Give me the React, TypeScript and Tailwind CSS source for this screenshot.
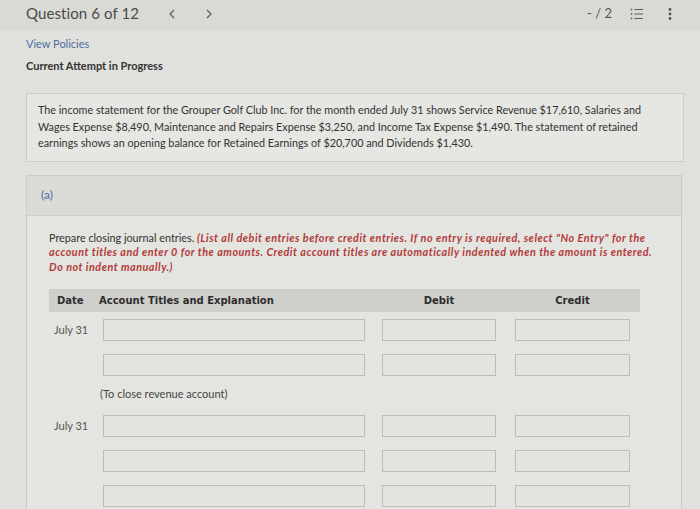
import React from "react";

const ListIcon: React.FC = () => (
    <svg width="14" height="14" viewBox="0 0 14 14" fill="none">
        <circle cx="1.5" cy="2.5" r="0.9" fill="#6b6b6b"/>
        <circle cx="1.5" cy="7" r="0.9" fill="#6b6b6b"/>
        <circle cx="1.5" cy="11.5" r="0.9" fill="#6b6b6b"/>
        <path d="M4.5 2.5H13M4.5 7H13M4.5 11.5H13" stroke="#5b5b5b" strokeWidth="1.2"/>
    </svg>
);

const Kebab: React.FC = () => (
    <svg width="4" height="14" viewBox="0 0 4 14">
        <circle cx="2" cy="2.5" r="1.4" fill="#555"/>
        <circle cx="2" cy="7" r="1.4" fill="#555"/>
        <circle cx="2" cy="11.5" r="1.4" fill="#555"/>
    </svg>
);

const Chevron: React.FC<{ dir: "left" | "right" }> = ({dir}) => (
    <svg width="6" height="10" viewBox="0 0 6 10" fill="none">
        <path d={dir === "left" ? "M5 1L1 5L5 9" : "M1 1L5 5L1 9"} stroke="#555" strokeWidth="1.1"/>
    </svg>
);

const Field: React.FC<{ w: string }> = ({w}) => (
    <div className={`${w} h-[22px] border border-[#bdbdb8] bg-[#e3e3df]`}/>
);

const EntryRow: React.FC<{ date?: string }> = ({date}) => (
    <div className="flex items-center h-[22px]">
        <div className="w-[54px] pl-[5px] text-[11px] text-[#555] font-['Lato']">{date}</div>
        <Field w="w-[262px]"/>
        <div className="w-[17px]"/>
        <Field w="w-[114px]"/>
        <div className="w-[19px]"/>
        <Field w="w-[115px]"/>
    </div>
);

export default function App() {
    return (
        <div className="w-[700px] h-[509px] overflow-hidden bg-[#dcdcd8] font-['Lato',sans-serif] text-[#3d3d3d]">
            {/* top bar */}
            <header className="h-[30px] pb-[3px] flex items-center pl-[26px] pr-[26px] bg-[#d9d9d5]">
                <span className="text-[15px] text-[#4a4a4a] tracking-[0.1px]">Question 6 of 12</span>
                <span className="ml-[30px] flex"><Chevron dir="left"/></span>
                <span className="ml-[31px] flex"><Chevron dir="right"/></span>
                <div className="ml-auto flex items-center">
                    <span className="text-[13px] text-[#555]">- / 2</span>
                    <span className="ml-[18px] flex"><ListIcon/></span>
                    <span className="ml-[24px] mr-[2px] flex"><Kebab/></span>
                </div>
            </header>

            <main className="px-[26px] pt-[6px] bg-[#e0e0dc] h-[479px]">
                <div className="text-[11px] text-[#4d6f9e] leading-[16px]">View Policies</div>
                <div className="mt-[6px] text-[11px] font-bold text-[#333] leading-[16px]">Current Attempt in Progress</div>

                {/* question text */}
                <div className="mt-[19px] border border-[#cbcbc7] bg-[#e6e6e2] pl-[11px] pr-[20px] pt-[8px] pb-[9px] w-[658px]">
                    <p className="text-[10.8px] leading-[16.5px] text-[#333]">
                        The income statement for the Grouper Golf Club Inc. for the month ended July 31 shows Service Revenue $17,610, Salaries and Wages Expense $8,490, Maintenance and Repairs Expense $3,250, and Income Tax Expense $1,490. The statement of retained earnings shows an opening balance for Retained Earnings of $20,700 and Dividends $1,430.
                    </p>
                </div>

                {/* part (a) */}
                <section className="mt-[13px] border border-[#cbcbc7] w-[656px] h-[340px]">
                    <div className="h-[40px] bg-[#dadad6] border-b border-[#cfcfcb] flex items-center pl-[14px]">
                        <span className="text-[12px] text-[#4a6fa5]">(a)</span>
                    </div>
                    <div className="bg-[#e4e4e0] h-[299px] pl-[22px] pt-[15px]">
                        <p className="text-[10.8px] leading-[14.5px] w-[614px] text-[#333]">
                            Prepare closing journal entries.{" "}
                            <span className="italic font-bold text-[#b23b3b] tracking-[0.5px]">
                                (List all debit entries before credit entries. If no entry is required, select "No Entry" for the account titles and enter 0 for the amounts. Credit account titles are automatically indented when the amount is entered. Do not indent manually.)
                            </span>
                        </p>

                        <div className="mt-[15px] w-[591px]">
                            <div className="h-[23px] bg-[#cfcfcb] flex items-center text-[10px] font-bold text-[#2e2e2e] font-['DejaVu_Sans',sans-serif]">
                                <span className="w-[50px] pl-[8px]">Date</span>
                                <span className="w-[283px]">Account Titles and Explanation</span>
                                <span className="w-[114px] text-center">Debit</span>
                                <span className="w-[19px]"/>
                                <span className="w-[115px] text-center">Credit</span>
                            </div>
                            <div className="mt-[7px] flex flex-col gap-[13px]">
                                <EntryRow date="July 31"/>
                                <EntryRow/>
                            </div>
                            <div className="mt-[10px] pl-[51px] text-[11px] text-[#444] leading-[16px]">(To close revenue account)</div>
                            <div className="mt-[13px] flex flex-col gap-[13px]">
                                <EntryRow date="July 31"/>
                                <EntryRow/>
                                <EntryRow/>
                            </div>
                        </div>
                    </div>
                </section>
            </main>
        </div>
    );
}
